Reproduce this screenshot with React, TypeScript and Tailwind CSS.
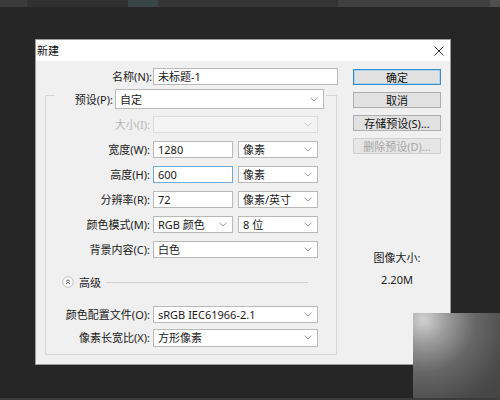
import React from "react";

const FONT = '"Noto Sans", "Noto Sans CJK SC", sans-serif';

function Chevron({ light = false }: { light?: boolean }) {
  return (
    <svg width="8" height="5" viewBox="0 0 8 5" className="shrink-0">
      <path d="M0.5 0.8 L4 4 L7.5 0.8" fill="none" stroke={light ? "#cfcfcf" : "#9a9a9a"} strokeWidth="1" />
    </svg>
  );
}

function Select({ value, w, h = "h-[17px]", disabled = false }: { value?: string; w: string; h?: string; disabled?: boolean }) {
  return (
    <div
      className={`${w} ${h} flex items-center justify-between pl-[4px] pr-[5px] border ${
        disabled ? "bg-[#f3f3f3] border-[#dcdcdc]" : "bg-white border-[#b9b9b9]"
      }`}
    >
      <span className="leading-none text-[#1a1a1a] whitespace-nowrap">{value}</span>
      <Chevron light={disabled} />
    </div>
  );
}

function Input({ value, w, focused = false }: { value: string; w: string; focused?: boolean }) {
  return (
    <div
      className={`${w} h-[17px] flex items-center pl-[4px] bg-white border ${
        focused ? "border-[#6fa9d8]" : "border-[#b9b9b9]"
      }`}
    >
      <span className="leading-none text-[#1a1a1a] whitespace-nowrap">{value}</span>
    </div>
  );
}

function Row({ label, disabled = false, children }: { label: string; disabled?: boolean; children: React.ReactNode }) {
  return (
    <div className="flex items-center h-[17px]">
      <div className={`w-[104px] text-right leading-none whitespace-nowrap ${disabled ? "text-[#b4b4b4]" : "text-[#1a1a1a]"}`}>
        {label}
      </div>
      <div className="ml-[3px] flex items-center gap-[5px]">{children}</div>
    </div>
  );
}

function Button({ label, primary = false, disabled = false }: { label: string; primary?: boolean; disabled?: boolean }) {
  return (
    <div
      className={`w-[88px] h-[16px] flex items-center justify-center border leading-none ${
        primary
          ? "bg-[#e1e1e1] border-[#3a8cc6] shadow-[inset_0_0_0_1px_#a9d3ef] text-[#111]"
          : disabled
          ? "bg-[#e6e6e6] border-[#cfcfcf] text-[#a6a6a6]"
          : "bg-[#e1e1e1] border-[#adadad] text-[#111]"
      }`}
    >
      {label}
    </div>
  );
}

export default function App() {
  return (
    <div
      className="relative w-[500px] h-[400px] bg-[#262626] overflow-hidden text-[11px]"
      style={{ fontFamily: FONT }}
    >
      {/* top strip */}
      <div className="flex h-[7px]">
        <div className="w-[27px] bg-[#3a3a3a]" />
        <div className="w-[101px] bg-[#313131]" />
        <div className="w-[30px] bg-[#3a4549]" />
        <div className="w-[180px] bg-[#353535]" />
        <div className="w-[152px] bg-[#404040]" />
        <div className="flex-1 bg-[#4f4f4f]" />
      </div>

      {/* dialog */}
      <div className="ml-[35px] mt-[32px] w-[416px] h-[326px] flex flex-col border border-[#9c9c9c] bg-[#f0f0f0]">
        <div className="h-[21px] bg-white flex items-center justify-between pl-[1px] pr-[6px] shrink-0">
          <span className="text-[#111] leading-none">新建</span>
          <svg width="10" height="10" viewBox="0 0 10 10">
            <path d="M0.5 0.5 L9.5 9.5 M9.5 0.5 L0.5 9.5" stroke="#333" strokeWidth="1" />
          </svg>
        </div>

        <div className="flex flex-1">
          {/* left column */}
          <div className="w-[302px] flex flex-col">
            <div className="flex items-center mt-[7px] h-[17px]">
              <div className="w-[116px] text-right leading-none text-[#1a1a1a]">名称(N):</div>
              <div className="ml-[1px]">
                <Input value="未标题-1" w="w-[185px]" />
              </div>
            </div>

            <div className="ml-[9px] mt-[10px] w-[292px] border border-[#d6d6d6] pb-[8px] flex flex-col">
              <div className="-mt-[7px] ml-[9px] w-[271px] bg-[#f0f0f0] flex items-center h-[20px]">
                <div className="w-[58px] text-right leading-none text-[#1a1a1a]">预设(P):</div>
                <div className="ml-[2px]">
                  <Select value="自定" w="w-[209px]" h="h-[20px]" />
                </div>
              </div>

              <div className="mt-[7px] flex flex-col gap-[8px]">
                <Row label="大小(I):" disabled>
                  <Select w="w-[165px]" disabled />
                </Row>
                <Row label="宽度(W):">
                  <Input value="1280" w="w-[80px]" />
                  <Select value="像素" w="w-[80px]" />
                </Row>
                <Row label="高度(H):">
                  <Input value="600" w="w-[80px]" focused />
                  <Select value="像素" w="w-[80px]" />
                </Row>
                <Row label="分辨率(R):">
                  <Input value="72" w="w-[80px]" />
                  <Select value="像素/英寸" w="w-[80px]" />
                </Row>
                <Row label="颜色模式(M):">
                  <Select value="RGB 颜色" w="w-[80px]" />
                  <Select value="8 位" w="w-[80px]" />
                </Row>
                <Row label="背景内容(C):">
                  <Select value="白色" w="w-[165px]" />
                </Row>
              </div>

              <div className="mt-[18px] h-[12px] flex items-center ml-[16px] mr-[28px]">
                <svg width="12" height="12" viewBox="0 0 12 12" className="shrink-0">
                  <circle cx="6" cy="6" r="5.3" fill="#f7f7f7" stroke="#c4c4c4" strokeWidth="1" />
                  <path d="M4 5.6 L6 3.8 L8 5.6 M4 8 L6 6.2 L8 8" fill="none" stroke="#444" strokeWidth="0.9" />
                </svg>
                <span className="ml-[5px] leading-none text-[#1a1a1a]">高级</span>
                <div className="ml-[5px] flex-1 h-px bg-[#d2d2d2]" />
              </div>

              <div className="mt-[18px] flex flex-col gap-[6px]">
                <Row label="颜色配置文件(O):">
                  <Select value="sRGB IEC61966-2.1" w="w-[165px]" />
                </Row>
                <Row label="像素长宽比(X):">
                  <Select value="方形像素" w="w-[165px]" h="h-[18px]" />
                </Row>
              </div>
            </div>
          </div>

          {/* right column */}
          <div className="ml-[15px] w-[88px] pt-[8px] flex flex-col">
            <div className="flex flex-col gap-[7px]">
              <Button label="确定" primary />
              <Button label="取消" />
              <Button label="存储预设(S)..." />
              <Button label="删除预设(D)..." disabled />
            </div>
            <div className="mt-[97px] text-center leading-[14px] text-[#1a1a1a]">图像大小:</div>
            <div className="mt-[8px] text-center leading-[14px] text-[#1a1a1a]">2.20M</div>
          </div>
        </div>
      </div>

      {/* overlapping gradient panel at bottom right */}
      <div
        className="absolute left-[413px] top-[313px] w-[87px] h-[85px]"
        style={{ background: "radial-gradient(circle at 12% 8%, #d2d2d2 0%, #9a9a9a 22%, #666 48%, #4a4a4a 80%, #444 100%)" }}
      />
      <div className="absolute left-0 bottom-0 w-full h-[2px] bg-[#3c3c3c]" />
    </div>
  );
}
